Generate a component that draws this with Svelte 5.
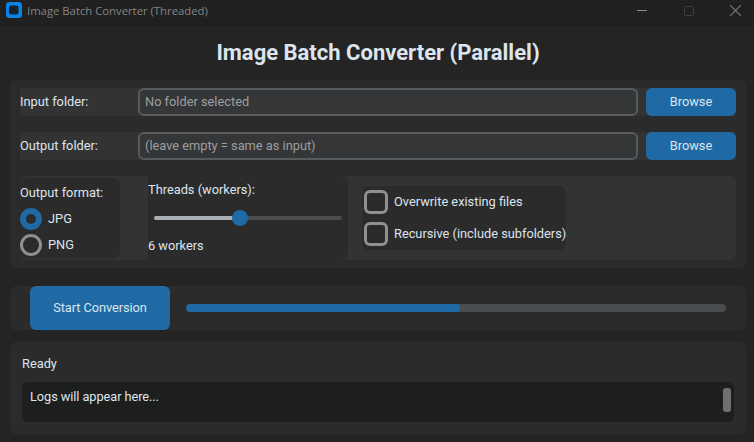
<script>
  const rows = [
    { label: 'Input folder:', placeholder: 'No folder selected' },
    { label: 'Output folder:', placeholder: '(leave empty = same as input)' }
  ];
</script>

<div class="window">
  <header class="titlebar">
    <svg class="appicon" width="18" height="18" viewBox="0 0 18 18"><rect x="0" y="0" width="16" height="16" rx="3.5" fill="#0a84e6"/><rect x="3" y="3.5" width="9.5" height="9" rx="2" fill="#16222c"/></svg>
    <span class="wintitle">Image Batch Converter (Threaded)</span>
    <div class="controls">
      <svg class="c-min" width="12" height="12" viewBox="0 0 12 12"><path d="M1 5.5H11" stroke="#8c8c8c"/></svg>
      <svg class="c-max" width="12" height="12" viewBox="0 0 12 12"><rect x="1.5" y="1.5" width="9" height="9" rx="1" fill="none" stroke="#3e3e3e"/></svg>
      <svg class="c-close" width="12" height="12" viewBox="0 0 12 12"><path d="M1 1L11 11M11 1L1 11" stroke="#7a7a7a"/></svg>
    </div>
  </header>

  <main class="content">
    <h1>Image Batch Converter (Parallel)</h1>

    <section class="panel settings">
      {#each rows as row}
        <div class="row">
          <span class="rowlabel">{row.label}</span>
          <div class="entry">{row.placeholder}</div>
          <button class="browse">Browse</button>
        </div>
      {/each}

      <div class="options">
        <div class="formats">
          <div class="fmt-title">Output format:</div>
          <div class="radio"><span class="dot on"></span>JPG</div>
          <div class="radio"><span class="dot"></span>PNG</div>
        </div>
        <div class="threads">
          <div class="th-title">Threads (workers):</div>
          <div class="slider">
            <div class="s-fill"></div>
            <div class="s-knob"></div>
          </div>
          <div class="th-value">6 workers</div>
        </div>
        <div class="checks">
          <div class="check"><span class="box"></span>Overwrite existing files</div>
          <div class="check"><span class="box"></span>Recursive (include subfolders)</div>
        </div>
      </div>
    </section>

    <section class="panel action">
      <button class="start">Start Conversion</button>
      <div class="progress"><div class="p-fill"></div></div>
    </section>

    <section class="panel logs">
      <div class="status">Ready</div>
      <div class="logbox">
        <span>Logs will appear here...</span>
        <div class="thumb"></div>
      </div>
    </section>
  </main>
</div>

<style>
  :global(body) { margin: 0; background: #242424; }
  .window { width: 754px; height: 442px; display: flex; flex-direction: column; background: #242424; color: #dce4ee; font-family: Roboto, sans-serif; font-size: 12.8px; overflow: hidden; }

  .titlebar { height: 26px; background: #202020; display: flex; align-items: flex-start; flex: none; }
  .appicon { margin: 2px 3px 0 6px; }
  .wintitle { font-family: "Open Sans", sans-serif; font-size: 11.3px; color: #858585; line-height: 22px; }
  .controls { margin-left: auto; display: flex; }
  .c-min { margin: 5px 35px 0 0; }
  .c-max { margin: 5px 34px 0 0; }
  .c-close { margin: 4px 12px 0 0; width: 13px; height: 13px; }

  .content { flex: 1; display: flex; flex-direction: column; padding: 0 8px 0 10px; }
  h1 { margin: 0; height: 54px; line-height: 54px; font-size: 22px; font-weight: 700; text-align: center; }

  .panel { background: #2b2b2b; border-radius: 6px; }
  .settings { height: 188px; box-sizing: border-box; padding: 8px 10px; display: flex; flex-direction: column; gap: 16px; }

  .row { height: 28px; display: flex; background: #333333; }
  .rowlabel { width: 118px; line-height: 28px; }
  .entry { width: 500px; box-sizing: border-box; border: 2px solid #565b5e; border-radius: 6px; background: #343638; color: #9e9e9e; padding-left: 5px; line-height: 24px; }
  button { border: 0; color: #dce4ee; font: inherit; padding: 0 0 2px; }
  .browse { width: 90px; margin-left: 8px; background: #1f6aa5; border-radius: 6px; }

  .options { height: 84px; display: flex; background: #333333; border-radius: 6px; }
  .formats { width: 100px; margin: 2px 0; background: #2b2b2b; border-radius: 6px; flex: none; }
  .fmt-title { margin-top: 4px; height: 24px; line-height: 22px; }
  .radio { display: flex; align-items: center; height: 26px; line-height: 24px; }
  .dot { width: 22px; height: 22px; box-sizing: border-box; border: 3px solid #8e9092; border-radius: 50%; margin-right: 6px; }
  .dot.on { border: 6px solid #1f6aa5; }

  .threads { width: 200px; margin-left: 28px; background: #2b2b2b; border-radius: 0 6px 6px 0; flex: none; }
  .th-title { height: 28px; line-height: 28px; }
  .slider { position: relative; margin: 12px 6px 0; height: 4px; background: #4a4d50; border-radius: 2px; }
  .s-fill { width: 86px; height: 4px; background: #aab0b5; border-radius: 2px; }
  .s-knob { position: absolute; left: 78px; top: -6px; width: 16px; height: 16px; background: #1f6aa5; border-radius: 50%; }
  .th-value { margin-top: 16px; line-height: 20px; }

  .checks { margin: 10px 0 10px 14px; width: 204px; height: 64px; background: #2b2b2b; border-radius: 6px; white-space: nowrap; flex: none; }
  .check { height: 32px; display: flex; align-items: center; margin-left: 2px; line-height: 30px; }
  .box { width: 24px; height: 24px; box-sizing: border-box; border: 3px solid #8e9092; border-radius: 6px; margin-right: 6px; flex: none; }

  .action { margin-top: 18px; height: 44px; display: flex; align-items: center; flex: none; }
  .start { width: 140px; height: 44px; margin-left: 20px; background: #1f6aa5; border-radius: 6px; letter-spacing: -0.07px; }
  .progress { width: 540px; height: 8px; margin-left: 16px; background: #4a4d50; border-radius: 4px; overflow: hidden; }
  .p-fill { width: 274px; height: 8px; background: #1f6aa5; border-radius: 4px; }

  .logs { margin-top: 12px; height: 92px; box-sizing: border-box; padding: 12px; flex: none; }
  .status { height: 28px; line-height: 20px; }
  .logbox { position: relative; height: 40px; background: #1d1e1e; border-radius: 6px; padding: 7px 8px 5px; box-sizing: border-box; line-height: 16px; letter-spacing: -0.08px; }
  .thumb { position: absolute; right: 3px; top: 6px; width: 8px; height: 24px; background: #6f6f6f; border-radius: 3px; }
</style>
